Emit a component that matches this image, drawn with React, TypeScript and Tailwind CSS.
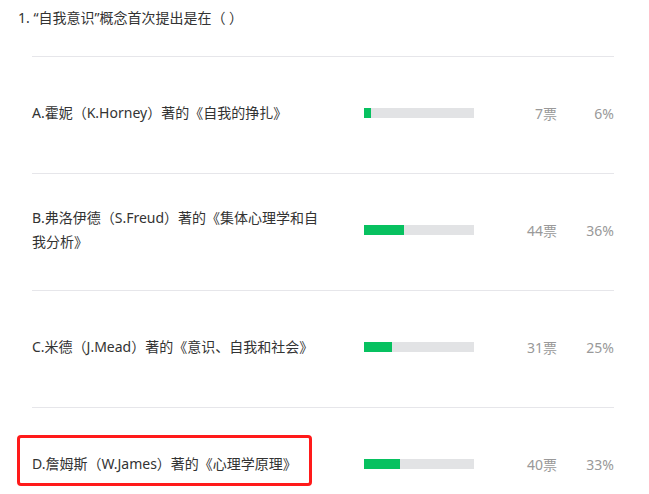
interface PollOption {
  label: string
  votes: number
  percent: number
  highlighted?: boolean
}

const options: PollOption[] = [
  { label: 'A.霍妮（K.Horney）著的《自我的挣扎》', votes: 7, percent: 6 },
  { label: 'B.弗洛伊德（S.Freud）著的《集体心理学和自我分析》', votes: 44, percent: 36 },
  { label: 'C.米德（J.Mead）著的《意识、自我和社会》', votes: 31, percent: 25 },
  { label: 'D.詹姆斯（W.James）著的《心理学原理》', votes: 40, percent: 33, highlighted: true },
]

const BAR_WIDTH = 110

export default function App() {
  return (
    <div className="min-h-screen bg-white text-[14px] text-[#333] font-['Noto_Sans','Noto_Sans_CJK_SC',sans-serif]">
      {/* Question title */}
      <div className="pt-1.5 pl-[18px] leading-6">1. “自我意识”概念首次提出是在（ ）</div>

      {/* Options list */}
      <div className="mt-[26px] ml-[32px] w-[582px]">
        {options.map((opt) => (
          <div
            key={opt.label}
            className="relative flex h-[117px] items-center border-t border-[#e6e6ea] pb-1"
          >
            <div className="w-[290px] leading-6">{opt.label}</div>
            <div className="ml-[42px] h-[10px] w-[110px] bg-[#e2e3e5]">
              <div
                className="h-full bg-[#07c160]"
                style={{ width: Math.round((opt.percent * BAR_WIDTH) / 100) }}
              />
            </div>
            <div className="w-[83px] text-right text-[#999]">{opt.votes}票</div>
            <div className="w-[57px] text-right text-[#999]">{opt.percent}%</div>

            {/* Annotation box */}
            {opt.highlighted && (
              <div className="absolute left-[-15px] top-[27px] h-[51px] w-[295px] rounded-[4px] border-[3px] border-[#ff1a1a]" />
            )}
          </div>
        ))}
      </div>
    </div>
  )
}
